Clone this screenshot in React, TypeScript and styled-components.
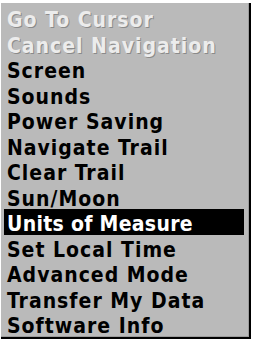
import React from 'react';
import styled, { createGlobalStyle } from 'styled-components';

const GlobalStyle = createGlobalStyle`
  html, body {
    margin: 0;
    padding: 0;
    background: #ffffff;
  }
`;

const Page = styled.div`
  padding: 3px 0 0 1px;
  width: 253px;
  height: 340px;
  box-sizing: border-box;
`;

const Menu = styled.ul`
  list-style: none;
  margin: 0;
  width: 250px;
  box-sizing: border-box;
  padding: 2px 5px 0 3px;
  background: #bababa;
  border-right: 2px solid #000;
  border-bottom: 2px solid #000;
  box-shadow: inset -1px -1px 0 #9c9c9c;
  height: 336px;
  font-family: 'DejaVu Sans Condensed', 'DejaVu Sans', sans-serif;
  font-stretch: condensed;
  font-weight: 700;
  font-size: 21px;
  letter-spacing: 1px;
`;

const Item = styled.li<{ $selected?: boolean; $disabled?: boolean }>`
  height: 25.5px;
  box-sizing: border-box;
  padding: 3px 0 0 3px;
  line-height: 25.5px;
  white-space: nowrap;
  background: ${p => (p.$selected ? '#000' : 'transparent')};
  color: ${p => (p.$selected ? '#fff' : p.$disabled ? '#ececec' : '#000')};
  text-shadow: ${p => (p.$disabled ? '1px 1px 0 #8a8a8a' : 'none')};
  letter-spacing: ${p => (p.$selected ? '0.3px' : '1px')};
`;

const items = [
    { label: 'Go To Cursor', disabled: true },
    { label: 'Cancel Navigation', disabled: true },
    { label: 'Screen' },
    { label: 'Sounds' },
    { label: 'Power Saving' },
    { label: 'Navigate Trail' },
    { label: 'Clear Trail' },
    { label: 'Sun/Moon' },
    { label: 'Units of Measure', selected: true },
    { label: 'Set Local Time' },
    { label: 'Advanced Mode' },
    { label: 'Transfer My Data' },
    { label: 'Software Info' }
];

export default function App() {
    return (
        <Page>
            <GlobalStyle />
            <Menu>
                {items.map(item => (
                    <Item key={item.label} $selected={item.selected} $disabled={item.disabled}>
                        {item.label}
                    </Item>
                ))}
            </Menu>
        </Page>
    );
}
